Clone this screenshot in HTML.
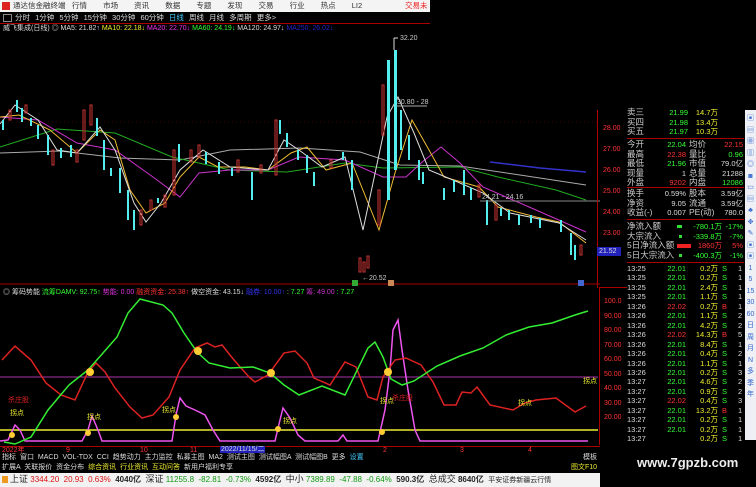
<!DOCTYPE html><html><head><meta charset="utf-8"><style>
*{margin:0;padding:0;box-sizing:border-box}
body{width:756px;height:487px;background:#000;overflow:hidden;position:relative;font-family:"Liberation Sans","Noto Sans CJK SC",sans-serif;font-size:8px;color:#ccc}
.a{position:absolute;white-space:nowrap;line-height:1}
.r{text-align:right}
.g{color:#3f3}.y{color:#ee3}.rd{color:#f33}.w{color:#ddd}.b{color:#fa4}
</style></head><body>
<!-- title bar -->
<div class="a" style="left:0;top:0;width:430px;height:12px;background:#f4f4f4"></div>
<div class="a" style="left:2px;top:2px;width:8px;height:8px;background:#d22"></div>
<div class="a" style="left:13px;top:2px;color:#333;font-size:7.5px">通达信金融终端</div>
<div class="a" style="left:72px;top:2px;color:#333;font-size:7.5px;word-spacing:14px">行情 市场 资讯 数据 专题 发现 交易 行业 热点 LI2</div>
<div class="a" style="left:405px;top:2px;color:#e22;font-size:7.5px">交易未</div>
<!-- period bar -->
<div class="a" style="left:3px;top:14px;width:9px;height:8px;border:1px solid #888"></div>
<div class="a w" style="left:15px;top:14px;font-size:7.5px;word-spacing:3px">分时 1分钟 5分钟 15分钟 30分钟 60分钟 <span style="color:#4cf">日线</span> 周线 月线 多周期 更多&gt;</div>
<div class="a" style="left:0;top:23px;width:430px;height:1px;background:#a00"></div>
<div class="a" style="left:3px;top:25px;font-size:7px"><span class="w">威飞集成(日线) ◎ MA5: 21.82↑</span> <span class="y">MA10: 22.18↓</span> <span style="color:#e3e">MA20: 22.70↓</span> <span class="g">MA60: 24.19↓</span> <span class="w">MA120: 24.97↓</span> <span style="color:#22c">MA250: 26.02↓</span></div>
<!-- main chart -->
<svg class="a" style="left:0;top:0" width="600" height="290">
<g stroke="#400" stroke-width="1">
<line x1="0" y1="122" x2="600" y2="122" stroke-dasharray="1 3"/>
</g>
<line x1="0" y1="284" x2="600" y2="284" stroke="#a00"/>
<polyline fill="none" stroke="#aaa" stroke-width="1" points="0,153 60,151 120,158 180,160 230,150 300,148 360,152 400,165 460,166 520,175 586,185"/>
<polyline fill="none" stroke="#2a2" stroke-width="1" points="0,147 57,129 115,133 172,157 230,170 287,172 345,163 383,168 460,167 498,177 556,190 586,200"/>
<polyline fill="none" stroke="#33c" stroke-width="1.5" points="490,162 540,168 586,172"/>
<polyline fill="none" stroke="#c3c" stroke-width="1" points="0,117 38,120 77,143 115,150 153,177 180,197 199,173 230,170 268,170 299,157 345,160 383,177 406,177 421,163 441,147 460,163 483,187 536,210 586,232"/>
<polyline fill="none" stroke="#eb3" stroke-width="1" points="0,117 19,115 50,130 77,153 100,130 115,140 130,190 146,213 165,203 180,177 199,157 218,167 245,167 268,170 291,153 307,147 326,170 352,163 379,230 395,173 412,120 429,150 444,177 479,187 498,207 536,217 559,222 586,243"/>
<polyline fill="none" stroke="#ddd" stroke-width="1" points="0,124 15,105 38,120 57,150 77,153 100,127 115,150 134,203 146,222 161,203 180,170 203,150 230,167 268,170 284,140 299,150 322,167 345,157 363,230 387,117 398,97 414,133 429,170 460,183 483,193 510,213 559,223 586,240"/>
<g fill="#5ee">
<rect x="2" y="120" width="2" height="10"/><rect x="16" y="100" width="2" height="12"/><rect x="21" y="108" width="2" height="14"/><rect x="30" y="118" width="2" height="8"/><rect x="37" y="125" width="2" height="14"/><rect x="47" y="135" width="2" height="20"/><rect x="60" y="148" width="2" height="10"/><rect x="70" y="145" width="2" height="12"/><rect x="96" y="118" width="2" height="18"/><rect x="103" y="140" width="2" height="30"/><rect x="110" y="168" width="2" height="8"/><rect x="119" y="168" width="2" height="25"/><rect x="127" y="190" width="2" height="30"/><rect x="133" y="210" width="2" height="20"/><rect x="157" y="198" width="2" height="5"/><rect x="178" y="144" width="2" height="18"/><rect x="205" y="152" width="2" height="12"/><rect x="218" y="162" width="2" height="12"/><rect x="231" y="168" width="2" height="8"/><rect x="251" y="172" width="2" height="28"/><rect x="279" y="120" width="2" height="14"/><rect x="286" y="133" width="2" height="14"/><rect x="297" y="150" width="2" height="10"/><rect x="306" y="155" width="2" height="18"/><rect x="313" y="172" width="2" height="14"/><rect x="342" y="152" width="2" height="8"/><rect x="351" y="160" width="2" height="30"/><rect x="387" y="60" width="3" height="140"/><rect x="394" y="50" width="3" height="120"/><rect x="400" y="110" width="2" height="40"/><rect x="408" y="135" width="2" height="25"/><rect x="418" y="160" width="2" height="20"/><rect x="422" y="172" width="2" height="12"/><rect x="443" y="188" width="2" height="12"/><rect x="453" y="180" width="2" height="12"/><rect x="463" y="170" width="2" height="25"/><rect x="470" y="188" width="2" height="12"/><rect x="486" y="200" width="2" height="25"/><rect x="500" y="208" width="2" height="8"/><rect x="508" y="210" width="2" height="10"/><rect x="518" y="215" width="2" height="10"/><rect x="530" y="215" width="2" height="8"/><rect x="539" y="218" width="2" height="10"/><rect x="560" y="220" width="2" height="12"/><rect x="570" y="233" width="2" height="22"/><rect x="574" y="245" width="2" height="15"/>
</g>
<g fill="none" stroke="#c33">
<rect x="9" y="110" width="2" height="10"/><rect x="25" y="105" width="2" height="8"/><rect x="52" y="150" width="2" height="15"/><rect x="76" y="150" width="2" height="12"/><rect x="83" y="110" width="2" height="30"/><rect x="90" y="105" width="2" height="20"/><rect x="140" y="210" width="2" height="15"/><rect x="150" y="200" width="2" height="10"/><rect x="164" y="195" width="2" height="12"/><rect x="173" y="150" width="2" height="45"/><rect x="190" y="150" width="2" height="12"/><rect x="198" y="145" width="2" height="12"/><rect x="237" y="160" width="2" height="12"/><rect x="260" y="165" width="2" height="8"/><rect x="275" y="120" width="2" height="55"/><rect x="330" y="160" width="2" height="8"/><rect x="378" y="190" width="2" height="35"/><rect x="382" y="85" width="2" height="50"/><rect x="478" y="185" width="2" height="12"/><rect x="495" y="205" width="2" height="15"/><rect x="580" y="245" width="2" height="10"/>
<rect x="359" y="258" width="2" height="14"/><rect x="363" y="262" width="2" height="10"/><rect x="367" y="256" width="2" height="12"/>
</g>
<line x1="394" y1="38" x2="394" y2="50" stroke="#ddd"/>
<line x1="394" y1="38" x2="398" y2="38" stroke="#ddd"/>
<text x="400" y="40" fill="#ccc" font-size="7">32.20</text>
<line x1="396" y1="106" x2="427" y2="106" stroke="#aaa"/>
<text x="397" y="104" fill="#ccc" font-size="7">30.80 - 28</text>
<line x1="480" y1="201" x2="600" y2="201" stroke="#888"/>
<text x="482" y="199" fill="#ccc" font-size="7">24.21 - 24.16</text>
<text x="362" y="280" fill="#ccc" font-size="7">←20.52</text>
<rect x="352" y="280" width="6" height="6" fill="#3a3"/><rect x="388" y="280" width="6" height="6" fill="#c85"/><rect x="578" y="280" width="6" height="6" fill="#46c"/>
</svg>
<!-- price axis -->
<div class="a" style="left:597px;top:110px;width:1px;height:178px;background:#a00"></div>
<div class="a rd" style="left:603px;top:118px;font-size:7px;line-height:21px">28.00<br>27.00<br>26.00<br>25.00<br>24.00<br>23.00<br>22.00</div>
<div class="a" style="left:597px;top:247px;width:24px;height:9px;background:#22b;color:#ddd;font-size:7px;padding:1px 2px">21.52</div>
<!-- indicator header -->
<div class="a" style="left:3px;top:289px;font-size:7px"><span class="w">◎ 筹码势能</span> <span class="g">流筹DAMV: 92.75↑</span> <span style="color:#d3d">势能: 0.00</span> <span class="rd">融资资金: 25.38↑</span> <span class="w">做空资金: 43.15↓</span> <span style="color:#33e">融券: 10.00↑</span> <span class="g">: 7.27</span> <span style="color:#c3c">筹: 49.00</span> <span class="g">: 7.27</span></div>
<!-- indicator chart -->
<svg class="a" style="left:0;top:290px" width="600" height="160">
<line x1="0" y1="87" x2="598" y2="87" stroke="#a3a" stroke-width="1"/>
<line x1="0" y1="140" x2="598" y2="140" stroke="#ee3" stroke-width="1.5"/>
<polyline fill="none" stroke="#e5e" stroke-width="1.5" points="0,151 8,150 15,135 20,140 25,151 82,151 88,140 92,126 98,140 102,151 172,151 176,125 180,108 186,116 195,120 205,125 213,140 220,151 275,151 280,130 283,118 290,128 298,145 305,151 338,151 343,145 347,151 378,151 385,120 390,80 393,40 398,30 402,60 408,100 415,140 420,151 588,151"/>
<polyline fill="none" stroke="#d22" stroke-width="1.5" points="2,70 15,56 31,70 46,93 61,105 75,110 88,82 96,73 105,82 115,98 130,117 142,128 153,125 169,107 180,80 195,58 207,53 215,57 222,55 234,70 249,87 255,92 268,85 284,63 295,61 307,73 314,88 330,95 345,72 356,77 368,107 377,110 383,87 395,70 406,68 421,75 433,92 444,115 456,115 462,102 471,103 477,97 490,115 513,120 525,113 536,110 556,108 575,122 586,116"/>
<polyline fill="none" stroke="#3e3" stroke-width="1.5" points="4,152 15,154 31,147 48,120 69,95 88,80 103,63 117,47 128,23 140,9 163,15 172,23 184,43 197,62 209,73 230,78 253,77 270,83 284,95 299,105 322,96 345,105 368,58 375,52 383,67 391,89 402,95 414,91 437,76 460,66 483,58 506,45 529,37 552,33 575,25 588,21"/>
<g fill="#fc3"><circle cx="12" cy="145" r="3"/><circle cx="88" cy="143" r="3"/><circle cx="176" cy="127" r="3"/><circle cx="278" cy="139" r="3"/><circle cx="382" cy="142" r="3"/><circle cx="90" cy="82" r="4"/><circle cx="198" cy="61" r="4"/><circle cx="271" cy="83" r="4"/><circle cx="388" cy="82" r="4"/></g>
<g font-size="7" fill="#ee3"><text x="10" y="125">拐点</text><text x="87" y="129">拐点</text><text x="162" y="122">拐点</text><text x="283" y="133">拐点</text><text x="380" y="113">拐点</text><text x="518" y="115">拐点</text><text x="583" y="93">拐点</text></g>
<g font-size="7" fill="#d22"><text x="8" y="112">杀庄股</text><text x="392" y="110">杀庄股</text></g>
</svg>
<!-- indicator axis -->
<div class="a" style="left:599px;top:287px;width:28px;height:158px;border:1px solid #a00;border-right:none"></div>
<div class="a rd" style="left:604px;top:295px;font-size:7px;line-height:14.5px">100.0<br>90.00<br>80.00<br>70.00<br>60.00<br>50.00<br>40.00<br>30.00<br>20.00</div>
<!-- date axis -->
<div class="a" style="left:0;top:446px;width:600px;height:1px;background:#a00"></div>
<div class="a rd" style="left:2px;top:447px;font-size:7px">2022年</div>
<div class="a rd" style="left:66px;top:447px;font-size:7px">9</div>
<div class="a rd" style="left:140px;top:447px;font-size:7px">10</div>
<div class="a rd" style="left:190px;top:447px;font-size:7px">11</div>
<div class="a" style="left:220px;top:446px;font-size:7px;background:#22b;color:#ddd;padding:0 1px">2022/11/15/二</div>
<div class="a rd" style="left:383px;top:447px;font-size:7px">2</div>
<div class="a rd" style="left:460px;top:447px;font-size:7px">3</div>
<div class="a rd" style="left:528px;top:447px;font-size:7px">4</div>
<!-- toolbars -->
<div class="a w" style="left:2px;top:454px;font-size:7px;word-spacing:2px">指标 窗口 MACD VOL-TDX CCI 趋势动力 主力监控 私募主图 MA2 测试主图 测试幅图A 测试幅图B 更多 <span style="color:#4cf">设置</span></div>
<div class="a w" style="left:583px;top:454px;font-size:7px">模板</div>
<div class="a w" style="left:2px;top:464px;font-size:7px;word-spacing:2px">扩展A 关联报价 资金分布 <span class="y">综合资讯</span> <span class="y">行业资讯</span> <span class="y">互动问答</span> 新用户福利专享</div>
<div class="a y" style="left:571px;top:464px;font-size:7px">图文F10</div>
<!-- status -->
<div class="a" style="left:0;top:473px;width:756px;height:14px;background:#f2f2f2"></div>
<div class="a" style="left:2px;top:476px;width:6px;height:7px;background:#e92"></div>
<div class="a" style="left:10px;top:475px;font-size:8px;color:#222"><span style="font-size:9px">上证</span> <span style="color:#d11">3344.20 &nbsp;20.93 &nbsp;0.63%</span> &nbsp;<b>4040亿</b> &nbsp;<span style="font-size:9px">深证</span> <span style="color:#191">11255.8 &nbsp;-82.81 &nbsp;-0.73%</span> &nbsp;<b>4592亿</b> &nbsp;<span style="font-size:9px">中小</span> <span style="color:#191">7389.89 &nbsp;-47.88 &nbsp;-0.64%</span> &nbsp;<b>590.3亿</b> &nbsp;<span style="font-size:9px">总成交</span> <b>8640亿</b> &nbsp;<span style="font-size:7px">平安证券新疆云行情</span></div>
<!-- bottom right black -->
<div class="a" style="left:600px;top:440px;width:156px;height:47px;background:#000"></div>
<div class="a" style="left:637px;top:456px;font-size:13px;font-weight:bold;color:#eee">www.7gpzb.com</div>
<!-- right panel -->
<div class="a" style="left:627px;top:108px;width:117px;height:332px;font-size:7.5px">
<div class="a" style="left:0;top:0;line-height:9.5px;font-size:8.5px;color:#ccc">卖三<br>买四<br>买五</div>
<div class="a r g" style="right:56px;top:0;line-height:9.5px;font-size:7.5px">21.99<br>21.98<br>21.97</div>
<div class="a r y" style="right:26px;top:0;line-height:9.5px">14.7万<br>13.4万<br>10.3万</div>
<div class="a" style="left:0;top:30px;width:117px;height:1px;background:#a00"></div>
<div class="a" style="left:0;top:32px;line-height:9.5px;font-size:8.5px">今开<br>最高<br>最低<br>现量<br>外盘</div>
<div class="a r" style="right:58px;top:32px;line-height:9.5px"><span class="g">22.04</span><br><span class="rd">22.38</span><br><span class="g">21.96</span><br><span class="w">1</span><br><span class="rd">9202</span></div>
<div class="a" style="left:62px;top:32px;line-height:9.5px;font-size:8.5px">均价<br>量比<br>市值<br>总量<br>内盘</div>
<div class="a r" style="right:1px;top:32px;line-height:9.5px"><span class="rd">22.15</span><br><span class="g">0.96</span><br><span class="w">79.0亿</span><br><span class="w">21288</span><br><span class="g">12086</span></div>
<div class="a" style="left:0;top:79px;width:117px;height:1px;background:#a00"></div>
<div class="a" style="left:0;top:81px;line-height:9.5px;font-size:8.5px">换手<br>净资<br>收益(-)</div>
<div class="a r w" style="right:58px;top:81px;line-height:9.5px">0.59%<br>9.05<br>0.007</div>
<div class="a" style="left:62px;top:81px;line-height:9.5px;font-size:8.5px">股本<br>流通<br>PE(动)</div>
<div class="a r w" style="right:1px;top:81px;line-height:9.5px">3.59亿<br>3.59亿<br>780.0</div>
<div class="a" style="left:0;top:111px;width:117px;height:1px;background:#a00"></div>
<div class="a" style="left:0;top:114px;line-height:9.7px;font-size:8.5px">净流入额<br>大宗流入<br>5日净流入额<br>5日大宗流入</div>
<div class="a" style="left:50px;top:117px;width:5px;height:3px;background:#3d3"></div>
<div class="a" style="left:52px;top:127px;width:3px;height:3px;background:#3d3"></div>
<div class="a" style="left:50px;top:136px;width:14px;height:4px;background:#e22"></div>
<div class="a" style="left:52px;top:146px;width:3px;height:3px;background:#3d3"></div>
<div class="a r" style="right:22px;top:114px;line-height:9.7px"><span class="g">-780.1万</span><br><span class="g">-339.8万</span><br><span class="rd">1860万</span><br><span class="g">-400.3万</span></div>
<div class="a r" style="right:1px;top:114px;line-height:9.7px"><span class="g">-17%</span><br><span class="g">-7%</span><br><span class="rd">5%</span><br><span class="g">-1%</span></div>
<div class="a" style="left:0;top:154px;width:117px;height:1px;background:#a00"></div>
<div class="a w" style="left:0;top:156px;line-height:9.45px">13:25<br>13:25<br>13:25<br>13:25<br>13:26<br>13:26<br>13:26<br>13:26<br>13:26<br>13:26<br>13:26<br>13:26<br>13:27<br>13:27<br>13:27<br>13:27<br>13:27<br>13:27<br>13:27</div>
<div class="a r" style="right:58px;top:156px;line-height:9.45px"><span class="g">22.01<br>22.01<br>22.01<br>22.01</span><br><span class="rd">22.02</span><br><span class="g">22.01<br>22.01</span><br><span class="rd">22.02</span><br><span class="g">22.01<br>22.01<br>22.01<br>22.01<br>22.01<br>22.01</span><br><span class="rd">22.02</span><br><span class="g">22.01<br>22.01<br>22.01</span></div>
<div class="a r y" style="right:26px;top:156px;line-height:9.45px">0.2万<br>0.2万<br>2.4万<br>1.1万<br>0.2万<br>1.1万<br>4.2万<br>14.3万<br>8.4万<br>0.4万<br>1.1万<br>0.2万<br>4.6万<br>0.9万<br>0.4万<br>13.2万<br>0.2万<br>0.2万<br>0.2万</div>
<div class="a" style="left:95px;top:156px;line-height:9.45px"><span class="g">S<br>S<br>S<br>S</span><br><span class="rd">B</span><br><span class="g">S<br>S</span><br><span class="rd">B</span><br><span class="g">S<br>S<br>S<br>S<br>S<br>S<br>S</span><br><span class="rd">B</span><br><span class="g">S<br>S<br>S</span></div>
<div class="a w" style="left:111px;top:156px;line-height:9.45px">1<br>1<br>1<br>1<br>1<br>2<br>2<br>5<br>1<br>2<br>1<br>3<br>2<br>2<br>3<br>1<br>1<br>1<br>1</div>
</div>
<!-- right toolbar -->
<div class="a" style="left:745px;top:110px;width:11px;height:330px;background:#eef0f5"></div>
<div class="a" style="left:746px;top:113px;font-size:7px;line-height:11.5px;color:#36c;text-align:center;width:9px">▣<br>▤<br>▦<br>▥<br>◎<br>◙<br>▭<br>▤<br>♣<br>✥<br>✎<br>▣<br>▣<br>1<br>5<br>15<br>30<br>60<br>日<br>周<br>月<br>N<br>多<br>季<br>年</div>
</body></html>
